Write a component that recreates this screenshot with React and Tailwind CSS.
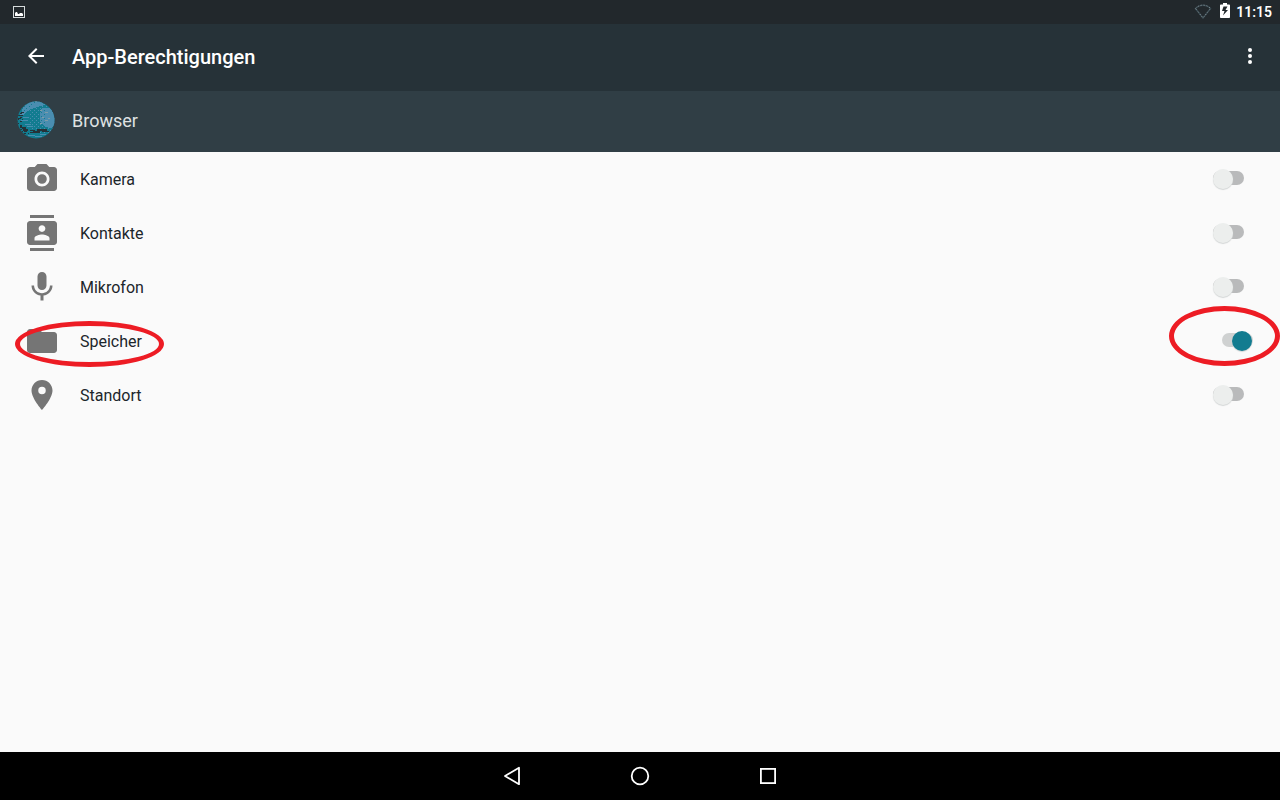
import React, { useState } from "react";

const permissions = [
  {
    id: "camera",
    label: "Kamera",
    path: "M12 8.8a3.2 3.2 0 1 0 0 6.4 3.2 3.2 0 0 0 0-6.4zM9 2L7.17 4H4c-1.1 0-2 .9-2 2v12c0 1.1.9 2 2 2h16c1.1 0 2-.9 2-2V6c0-1.1-.9-2-2-2h-3.17L15 2H9zm3 15c-2.76 0-5-2.24-5-5s2.24-5 5-5 5 2.24 5 5-2.24 5-5 5z",
  },
  {
    id: "contacts",
    label: "Kontakte",
    path: "M20 0H4v2h16V0zM4 24h16v-2H4v2zM20 4H4c-1.1 0-2 .9-2 2v12c0 1.1.9 2 2 2h16c1.1 0 2-.9 2-2V6c0-1.1-.9-2-2-2zm-8 2.75c1.24 0 2.25 1.01 2.25 2.25s-1.01 2.25-2.25 2.25S9.75 10.24 9.75 9 10.76 6.75 12 6.75zM17 17H7v-1.5c0-1.67 3.33-2.5 5-2.5s5 .83 5 2.5V17z",
  },
  {
    id: "microphone",
    label: "Mikrofon",
    path: "M12 14c1.66 0 2.99-1.34 2.99-3L15 5c0-1.66-1.34-3-3-3S9 3.34 9 5v6c0 1.66 1.34 3 3 3zm5.3-3c0 3-2.54 5.1-5.3 5.1S6.7 14 6.7 11H5c0 3.41 2.72 6.23 6 6.72V21h2v-3.28c3.28-.48 6-3.3 6-6.72h-1.7z",
  },
  {
    id: "storage",
    label: "Speicher",
    marked: true,
    path: "M10 4H4c-1.1 0-1.99.9-1.99 2L2 18c0 1.1.9 2 2 2h16c1.1 0 2-.9 2-2V8c0-1.1-.9-2-2-2h-8l-2-2z",
  },
  {
    id: "location",
    label: "Standort",
    path: "M12 2C8.13 2 5 5.13 5 9c0 5.25 7 13 7 13s7-7.75 7-13c0-3.87-3.13-7-7-7zm0 9.5a2.5 2.5 0 0 1 0-5 2.5 2.5 0 0 1 0 5z",
  },
];

function StatusBar() {
  return (
    <div className="flex h-6 items-center justify-between bg-[#22282c] pr-2 pl-3 text-white">
      <svg width="14" height="14" viewBox="0 0 14 14" fill="none">
        <rect x="1.5" y="1.5" width="11" height="11" stroke="#d5dadb" />
        <path d="M3 11V8l1-1h1l1 2h1l1-1h2l1 1v2z" fill="#fff" />
      </svg>
      <div className="flex items-center">
        <svg width="18" height="16" viewBox="0 0 18 16" fill="none">
          <path
            d="M1.500 4.500C5.500 0 12.500 0 16.500 4.500L9 14z"
            stroke="#37474f"
            strokeWidth="1.500"
          />
          <path
            d="M1.500 4.500C5.500 0 12.500 0 16.500 4.500L9 14z"
            stroke="#8b979b"
            strokeDasharray="1 2"
          />
        </svg>
        <svg className="mr-1.5 ml-2" width="10" height="18" viewBox="0 0 10 18">
          <path
            d="M3 0h4v1.500h2.200c.4 0 .8.4.8.8v12c0 .4-.4.8-.8.8H.8c-.4 0-.8-.4-.8-.8v-12c0-.4.400-.8.8-.8H3z"
            fill="#fff"
          />
          <path d="M7.500 3.500H3.500L2 8h2.500L3 12.500 8 7H5.500z" fill="#22282c" />
        </svg>
        <span className="text-sm font-semibold">11:15</span>
      </div>
    </div>
  );
}

function GlobeIcon() {
  return (
    <svg width="40" height="40" viewBox="0 0 40 40" shapeRendering="crispEdges">
      <defs>
        <clipPath id="globe">
          <circle cx="20" cy="20" r="18.500" />
        </clipPath>
        <pattern id="blueDots" width="4" height="4" patternUnits="userSpaceOnUse">
          <path d="M0 0h1v1H0zM2 2h1v1H2z" fill="#4a8db0" />
        </pattern>
        <pattern id="tealDots" width="5" height="4" patternUnits="userSpaceOnUse">
          <path d="M0 0h1v1H0zM3 2h1v1H3z" fill="#127c90" />
        </pattern>
        <pattern id="darkDots" width="4" height="4" patternUnits="userSpaceOnUse">
          <path d="M0 1h2v1H0zM2 3h1v1H2z" fill="#263238" />
        </pattern>
      </defs>
      <g clipPath="url(#globe)">
        <path fill="#127c90" d="M0 0h40v40H0z" />
        <path fill="url(#blueDots)" d="M14 4h26v30H14z" />
        <path fill="#4a8db0" d="M9 4l7-3h8l5 4-7 2-5 1-5 3-5 4H4zM26 8h8l5 7v10l-4 3-6-1-5-5v-8z" />
        <path fill="url(#tealDots)" d="M5 2h14l-6 9H3zM22 6h8v20h-8z" />
        <path fill="url(#darkDots)" d="M1 12h5l2 6-2 5 3 8 5 2-5 2-8-5z" />
        <path
          fill="#263238"
          d="M5 12h3v1H5zM3 15h4v1H3zM2 18h3v1H2zM4 25h2v3H4zM6 27h4v2H6zM7 29h5v2H7zM8 31h3v1H8zM14 30h5v1h-5zM17 31h7v2h-7zM21 29h10v2H21zM26 31h7v1h-7zM14 32h5v1h-5z"
        />
        <path
          fill="#4a8db0"
          d="M7 17h6v1H7zM5 20h7v1H5zM9 24h6v1H9zM11 26h6v1h-6zM12 35h7v1h-7zM19 36h7v1h-7zM24 34h6v1h-6z"
        />
        <path
          fill="#7e9ca8"
          d="M24 10h2v1h-2zM29 12h3v1h-3zM26 17h2v1h-2zM32 18h2v1h-2zM29 20h3v1h-3zM24 23h2v1h-2zM14 1h2v1h-2zM19 1h2v1h-2z"
        />
      </g>
    </svg>
  );
}

function AppBar() {
  return (
    <header className="flex h-[66px] items-center justify-between bg-[#263238] pr-[18px] pb-0.5 pl-6 text-white">
      <div className="flex items-center gap-6">
        <button type="button" aria-label="Zurück">
          <svg width="24" height="24" viewBox="0 0 24 24" fill="currentColor">
            <path d="M20 11H7.830l5.590-5.590L12 4l-8 8 8 8 1.410-1.410L7.830 13H20v-2z" />
          </svg>
        </button>
        <h1 className="pt-0.5 text-xl font-medium">App-Berechtigungen</h1>
      </div>
      <button type="button" aria-label="Weitere Optionen">
        <svg width="24" height="24" viewBox="0 0 24 24" fill="currentColor">
          <circle cx="12" cy="6" r="2" />
          <circle cx="12" cy="12" r="2" />
          <circle cx="12" cy="18" r="2" />
        </svg>
      </button>
    </header>
  );
}

function PermissionRow({ item, checked, onToggle }) {
  return (
    <li className="relative">
      <label
        htmlFor={item.id}
        className="flex h-[54px] items-center gap-5 pr-[27px] pl-6"
      >
        <svg width="36" height="36" viewBox="0 0 24 24" fill="#757575">
          <path d={item.path} />
        </svg>
        <span className="flex-1 pt-0.5 text-base text-[#1c262b]">{item.label}</span>
        <input
          id={item.id}
          type="checkbox"
          checked={checked}
          onChange={onToggle}
          className="relative h-5 w-10 appearance-none before:absolute before:top-0.5 before:left-0 before:h-3.5 before:w-[31px] before:rounded-full before:bg-[#b9babb] after:absolute after:top-0 after:left-0 after:size-5 after:rounded-full after:bg-[#eceeed] after:shadow-[0_1px_1px_#d3d6d6] checked:before:left-[9px] checked:before:bg-[#cfd1d1] checked:after:left-[19px] checked:after:bg-[#127c90]"
        />
      </label>
      {/* red rings around the highlighted entry */}
      {item.marked && (
        <>
          <div className="pointer-events-none absolute top-[7px] left-[15px] h-[46px] w-[149px] rounded-[50%] border-5 border-[#ed1c24]" />
          <div className="pointer-events-none absolute -top-2 right-0 h-[60px] w-[111px] rounded-[50%] border-5 border-[#ed1c24]" />
        </>
      )}
    </li>
  );
}

function NavigationBar() {
  return (
    <nav className="flex h-12 justify-center bg-black text-white">
      <button type="button" aria-label="Zurück" className="flex w-32 items-center justify-center">
        <svg width="24" height="24" viewBox="0 0 24 24" fill="none" stroke="currentColor" strokeWidth="1.800">
          <path d="M19 3.800v16.400L5 12z" strokeLinejoin="round" />
        </svg>
      </button>
      <button type="button" aria-label="Startseite" className="flex w-32 items-center justify-center">
        <svg width="24" height="24" viewBox="0 0 24 24" fill="none" stroke="currentColor" strokeWidth="1.800">
          <circle cx="12" cy="12" r="8.300" />
        </svg>
      </button>
      <button type="button" aria-label="Übersicht" className="flex w-32 items-center justify-center">
        <svg width="24" height="24" viewBox="0 0 24 24" fill="none" stroke="currentColor" strokeWidth="1.800">
          <rect x="4.900" y="4.900" width="14.200" height="14.200" />
        </svg>
      </button>
    </nav>
  );
}

function App() {
  const [granted, setGranted] = useState({ storage: true });

  const toggle = (id) => {
    setGranted((prev) => ({ ...prev, [id]: !prev[id] }));
  };

  return (
    <div className="flex min-h-screen flex-col overflow-x-hidden bg-[#fafafa] font-['Roboto',sans-serif]">
      <StatusBar />
      <AppBar />
      <div className="flex h-[62px] items-center gap-4 border-t border-[#263238] bg-[#303e45] px-4 pb-1">
        <GlobeIcon />
        <h2 className="pt-0.5 text-lg text-[#dfe2e3]">Browser</h2>
      </div>
      <main className="flex-1">
        <ul>
          {permissions.map((item) => (
            <PermissionRow
              key={item.id}
              item={item}
              checked={!!granted[item.id]}
              onToggle={() => toggle(item.id)}
            />
          ))}
        </ul>
      </main>
      <NavigationBar />
    </div>
  );
}

export default App;
